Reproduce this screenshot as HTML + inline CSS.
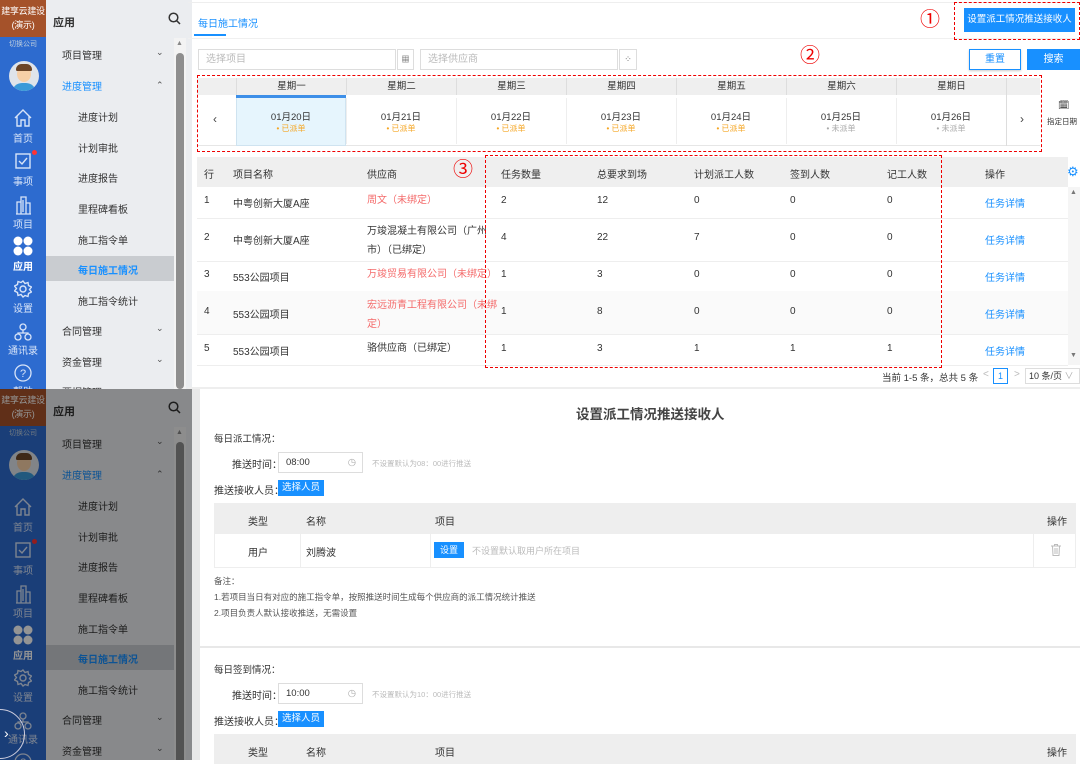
<!DOCTYPE html>
<html><head><meta charset="utf-8"><style>
*{margin:0;padding:0;box-sizing:border-box}
body{width:1080px;height:760px;overflow:hidden;position:relative;background:#fff;font-family:"Liberation Sans","Noto Sans CJK SC",sans-serif;font-size:10px;color:#333}
.a{position:absolute;white-space:nowrap}
.sb{position:absolute;left:0;width:192px;height:389px;overflow:hidden}
.rail{position:absolute;left:0;top:0;width:46px;height:389px;background:#2d6bcf}
.brand{position:absolute;left:0;top:0;width:46px;height:37px;background:#a5522a;color:#fff;font-size:9px;text-align:center;line-height:14px;padding-top:4px;white-space:nowrap;letter-spacing:-0.3px;overflow:hidden}
.menu{position:absolute;left:46px;top:0;width:146px;height:389px;background:#ebedf0}
.ri{position:absolute;left:0;width:46px;text-align:center;color:#d8e4f8;font-size:10px}
.mi{position:absolute;font-size:10px;color:#333}
.chev{position:absolute;left:110px;font-size:9px;color:#555}
.red{border:1.5px dashed #e00;position:absolute}
.circ{position:absolute;color:#e00;font-size:20px;line-height:20px}
.btn{position:absolute;background:#1890ff;color:#fff;text-align:center}
.inp{position:absolute;border:1px solid #ddd;background:#fff;color:#bbb;padding-left:7px}
.th{position:absolute;color:#333}
</style></head><body>

<!-- TOP SIDEBAR -->
<div class="sb" style="top:0">
 <div class="rail"></div>
 <div class="brand">建享云建设<br>(演示)</div>
 <div class="ri" style="top:39px;font-size:7px;color:#bcd">切换公司</div>
 <div class="a" style="left:9px;top:61px;width:30px;height:30px;border-radius:50%;background:#dfe4ea;overflow:hidden">
  <div class="a" style="left:8px;top:5px;width:14px;height:16px;border-radius:50%;background:#f6cfa6"></div>
  <div class="a" style="left:7px;top:3px;width:16px;height:7px;border-radius:8px 8px 2px 2px;background:#6b4527"></div>
  <div class="a" style="left:3px;top:22px;width:24px;height:12px;border-radius:10px 10px 0 0;background:#3a9ad9"></div>
 </div>
 <svg class="a" style="left:14px;top:109px" width="18" height="18" viewBox="0 0 18 18" fill="none" stroke="#d8e4f8" stroke-width="1.4"><path d="M1 9 9 1l8 8M3 7v10h4v-6h4v6h4V7"/></svg>
 <div class="ri" style="top:130px">首页</div>
 <svg class="a" style="left:15px;top:153px" width="16" height="16" viewBox="0 0 16 16" fill="none" stroke="#d8e4f8" stroke-width="1.4"><rect x="1" y="1" width="14" height="14"/><path d="M4 8l3 3 5-6"/></svg>
 <div class="a" style="left:32px;top:150px;width:5px;height:5px;border-radius:50%;background:#f33"></div>
 <div class="ri" style="top:173px">事项</div>
 <svg class="a" style="left:15px;top:195px" width="17" height="20" viewBox="0 0 17 20" fill="none" stroke="#d8e4f8" stroke-width="1.3"><path d="M1 19h15M2 19V7h4v12M6 19V2h5v17M11 19V8h4v11M8 5v12"/></svg>
 <div class="ri" style="top:216px">项目</div>
 <svg class="a" style="left:13px;top:236px" width="20" height="20" viewBox="0 0 20 20" fill="#fff"><circle cx="5" cy="5" r="4.5"/><circle cx="15" cy="5" r="4.5"/><circle cx="5" cy="15" r="4.5"/><circle cx="15" cy="15" r="4.5"/></svg>
 <div class="ri" style="top:258px;color:#fff;font-weight:bold">应用</div>
 <svg class="a" style="left:14px;top:280px" width="18" height="18" viewBox="0 0 18 18" fill="none" stroke="#d8e4f8" stroke-width="1.4"><circle cx="9" cy="9" r="3"/><path d="M9 1l2 2.5 3-1 .5 3 3 1.5-2 2.5 2 2.5-3 1.5-.5 3-3-1L9 17l-2-2.5-3 1-.5-3-3-1.5 2-2.5-2-2.5 3-1.5.5-3 3 1z"/></svg>
 <div class="ri" style="top:300px">设置</div>
 <svg class="a" style="left:14px;top:323px" width="18" height="18" viewBox="0 0 18 18" fill="none" stroke="#d8e4f8" stroke-width="1.3"><circle cx="9" cy="4" r="3"/><circle cx="4" cy="14" r="3"/><circle cx="14" cy="14" r="3"/><path d="M9 7v3M4 11v-1h10v1"/></svg>
 <div class="ri" style="top:342px">通讯录</div>
 <svg class="a" style="left:14px;top:364px" width="18" height="18" viewBox="0 0 18 18" fill="none" stroke="#d8e4f8" stroke-width="1.3"><circle cx="9" cy="9" r="8"/><text x="9" y="13" font-size="11" fill="#d8e4f8" stroke="none" text-anchor="middle" font-family="Liberation Sans">?</text></svg>
 <div class="ri" style="top:383px">帮助</div>
 <div class="menu">
  <div class="mi" style="left:7px;top:14px;font-size:11px;font-weight:bold">应用</div>
  <svg class="a" style="left:122px;top:12px" width="13" height="13" viewBox="0 0 13 13" fill="none" stroke="#333" stroke-width="1.5"><circle cx="5.5" cy="5.5" r="4.3"/><path d="M8.7 8.7 12 12"/></svg>
  <div class="a" style="left:128px;top:38px;width:12px;height:351px;background:#f3f3f3"></div>
  <div class="a" style="left:130px;top:53px;width:8px;height:336px;border-radius:4px;background:#8e8e8e"></div>
  <div class="a" style="left:130px;top:40px;font-size:7px;color:#888">▲</div>
  <div class="mi" style="left:16px;top:47px">项目管理</div><div class="chev" style="top:47px">⌄</div>
  <div class="mi" style="left:16px;top:78px;color:#1890ff">进度管理</div><div class="chev" style="top:80px">⌃</div>
  <div class="mi" style="left:32px;top:109px">进度计划</div>
  <div class="mi" style="left:32px;top:140px">计划审批</div>
  <div class="mi" style="left:32px;top:170px">进度报告</div>
  <div class="mi" style="left:32px;top:201px">里程碑看板</div>
  <div class="mi" style="left:32px;top:232px">施工指令单</div>
  <div class="a" style="left:0;top:256px;width:128px;height:25px;background:#c9ccd0"></div>
  <div class="mi" style="left:32px;top:262px;color:#1890ff;font-weight:bold">每日施工情况</div>
  <div class="mi" style="left:32px;top:293px">施工指令统计</div>
  <div class="mi" style="left:16px;top:323px">合同管理</div><div class="chev" style="top:323px">⌄</div>
  <div class="mi" style="left:16px;top:354px">资金管理</div><div class="chev" style="top:354px">⌄</div>
  <div class="mi" style="left:16px;top:384px">票据管理</div>
 </div>
</div>

<!-- TOP MAIN -->
<div class="a" style="left:192px;top:0;width:888px;height:389px;background:#fff"></div>
<div class="a" style="left:188px;top:2px;width:892px;height:1px;background:#eee"></div>
<div class="a" style="left:198px;top:15px;color:#1890ff">每日施工情况</div>
<div class="a" style="left:194px;top:34px;width:32px;height:2px;background:#1890ff"></div>
<div class="a" style="left:188px;top:38px;width:892px;height:1px;background:#f0f0f0"></div>
<div class="btn" style="left:964px;top:8px;width:111px;height:24px;line-height:24px;font-size:9.5px">设置派工情况推送接收人</div>
<div class="red" style="left:954px;top:2px;width:126px;height:38px"></div>
<div class="circ" style="left:920px;top:10px">①</div>

<div class="inp" style="left:198px;top:49px;width:198px;height:21px;line-height:19px">选择项目</div>
<div class="a" style="left:397px;top:49px;width:17px;height:21px;border:1px solid #ddd;font-size:8px;text-align:center;line-height:19px">▦</div>
<div class="inp" style="left:420px;top:49px;width:198px;height:21px;line-height:19px">选择供应商</div>
<div class="a" style="left:619px;top:49px;width:18px;height:21px;border:1px solid #ddd;font-size:9px;text-align:center;line-height:19px;color:#666">⁘</div>
<div class="circ" style="left:800px;top:46px">②</div>
<div class="a" style="left:969px;top:49px;width:52px;height:21px;border:1px solid #1890ff;color:#1890ff;text-align:center;line-height:19px;box-shadow:0 1px 2px #ccc">重置</div>
<div class="btn" style="left:1027px;top:49px;width:53px;height:21px;line-height:21px">搜索</div>

<!-- calendar -->
<div class="a" style="left:197px;top:78px;width:843px;height:17px;background:#efefef"></div>
<div class="a" style="left:197px;top:95px;width:843px;height:51px;background:#fff;border-bottom:1px solid #e6e6e6"></div>
<div class="a" style="left:236px;top:95px;width:110px;height:51px;background:#e6f5fd;border:1px solid #cfe3f0"></div>
<div class="a" style="left:236px;top:95px;width:110px;height:3px;background:#3d8fe8"></div>
<div class="a" style="left:213px;top:112px;font-size:12px;color:#444">‹</div>
<div class="a" style="left:1020px;top:112px;font-size:12px;color:#444">›</div>
<div id="cal"></div>
<div class="a" style="left:1058px;top:100px;font-size:9px">🗓</div>
<div class="a" style="left:1047px;top:116px;font-size:7.5px">指定日期</div>
<div class="red" style="left:197px;top:75px;width:845px;height:77px"></div>

<!-- table -->
<div class="a" style="left:197px;top:157px;width:871px;height:30px;background:#efefef"></div>
<div class="a" style="left:197px;top:218px;width:871px;height:1px;background:#eee"></div>
<div class="a" style="left:197px;top:261px;width:871px;height:1px;background:#eee"></div>
<div class="a" style="left:197px;top:291px;width:871px;height:1px;background:#eee"></div>
<div class="a" style="left:197px;top:291px;width:871px;height:43px;background:#fafafa"></div>
<div class="a" style="left:197px;top:334px;width:871px;height:1px;background:#eee"></div>
<div class="a" style="left:197px;top:365px;width:871px;height:1px;background:#eee"></div>
<div class="th" style="left:204px;top:166px">行</div>
<div class="th" style="left:233px;top:166px">项目名称</div>
<div class="th" style="left:367px;top:166px">供应商</div>
<div class="th" style="left:501px;top:166px">任务数量</div>
<div class="th" style="left:597px;top:166px">总要求到场</div>
<div class="th" style="left:694px;top:166px">计划派工人数</div>
<div class="th" style="left:790px;top:166px">签到人数</div>
<div class="th" style="left:887px;top:166px">记工人数</div>
<div class="th" style="left:985px;top:166px">操作</div>
<div class="circ" style="left:453px;top:160px">③</div>
<div class="a" style="left:1067px;top:164px;color:#1890ff;font-size:13px">⚙</div>
<div class="a" style="left:1068px;top:187px;width:12px;height:178px;background:#f5f5f5"></div>
<div class="a" style="left:1070px;top:189px;font-size:7px;color:#777">▲</div>
<div class="a" style="left:1070px;top:352px;font-size:7px;color:#777">▼</div>
<div id="rows"></div>
<div class="red" style="left:485px;top:155px;width:457px;height:213px"></div>
<div class="a" style="left:882px;top:370px;font-size:9.5px">当前 1-5 条，总共 5 条</div>
<div class="a" style="left:983px;top:369px;color:#bbb">&lt;</div>
<div class="a" style="left:993px;top:368px;width:15px;height:16px;border:1px solid #1890ff;color:#1890ff;text-align:center;line-height:14px;font-size:9px">1</div>
<div class="a" style="left:1014px;top:369px;color:#bbb">&gt;</div>
<div class="a" style="left:1025px;top:368px;width:55px;height:16px;border:1px solid #ddd;line-height:14px;padding-left:3px;font-size:9px">10 条/页 <span style="color:#aaa">∨</span></div>
<div class="a" style="left:188px;top:387px;width:892px;height:2px;background:#eee"></div>

<!-- BOTTOM -->
<div class="sb" style="top:389px;height:371px">
 <div style="position:absolute;left:0;top:0;width:192px;height:389px" id="sb2"></div>
</div>

<div class="a" style="left:192px;top:389px;width:8px;height:371px;background:#e8e8e8"></div>
<div class="a" style="left:200px;top:389px;width:880px;height:371px;background:#fff"></div>
<div class="a" style="left:576px;top:403px;font-size:13.5px;font-weight:bold;color:#444">设置派工情况推送接收人</div>
<div id="sec"></div>
<div class="a" style="left:200px;top:646px;width:880px;height:2px;background:#e8e8e8"></div>

<script>
var days=['星期一','星期二','星期三','星期四','星期五','星期六','星期日'],h='';
for(var i=0;i<7;i++){var x=236+i*110;
h+='<div class="a" style="left:'+x+'px;top:78px;width:110px;height:17px;border-left:1px solid #ddd;text-align:center;line-height:17px;font-size:9.5px">'+days[i]+'</div>';
if(i>0)h+='<div class="a" style="left:'+x+'px;top:98px;width:1px;height:46px;background:#eee"></div>';
h+='<div class="a" style="left:'+x+'px;top:109px;width:110px;text-align:center;font-size:9.5px">01月'+(20+i)+'日</div>';
h+='<div class="a" style="left:'+x+'px;top:123px;width:110px;text-align:center;font-size:8px;color:'+(i<5?'#f5a623':'#aaa')+'">• '+(i<5?'已派单':'未派单')+'</div>';}
h+='<div class="a" style="left:1006px;top:78px;width:1px;height:68px;background:#ddd"></div>';
document.getElementById('cal').innerHTML=h;
var R=[[202,'1','中粤创新大厦A座','周文（未绑定）',1,'2','12','0','0','0'],[239,'2','中粤创新大厦A座','万竣混凝土有限公司（广州<br>市）（已绑定）',0,'4','22','7','0','0'],[276,'3','553公园项目','万竣贸易有限公司（未绑定）',1,'1','3','0','0','0'],[313,'4','553公园项目','宏远沥青工程有限公司（未绑<br>定）',1,'1','8','0','0','0'],[350,'5','553公园项目','骆供应商（已绑定）',0,'1','3','1','1','1']];
h='';R.forEach(function(r){var y=r[0];var two=r[3].indexOf('<br>')>0;
h+='<div class="a" style="left:204px;top:'+(y-7)+'px">'+r[1]+'</div>';
h+='<div class="a" style="left:233px;top:'+(y-7)+'px">'+r[2]+'</div>';
h+='<div class="a" style="left:367px;top:'+(y-(two?17:7))+'px;line-height:'+(two?'19px':'12px')+';color:'+(r[4]?'#f46a6a':'#333')+'">'+r[3]+'</div>';
[501,597,694,790,887].forEach(function(x,k){h+='<div class="a" style="left:'+x+'px;top:'+(y-7)+'px">'+r[5+k]+'</div>';});
h+='<div class="a" style="left:985px;top:'+(y-7)+'px;color:#1890ff">任务详情</div>';});
document.getElementById('rows').innerHTML=h;
var s=document.querySelector('.sb').innerHTML;
document.getElementById('sb2').innerHTML=s+'<div class="a" style="left:0;top:0;width:192px;height:389px;background:rgba(0,0,0,.42)"></div><div class="a" style="left:-25px;top:320px;width:50px;height:50px;border-radius:50%;border:1.5px solid #ccd"></div><div class="a" style="left:4px;top:336px;color:#fff;font-size:14px">›</div>';
function sec(y,t1,tm,ht,full){var q='';
q+='<div class="a" style="left:214px;top:'+y+'px;font-size:9.5px">'+t1+'</div>';
q+='<div class="a" style="left:232px;top:'+(y+25)+'px;font-size:10px">推送时间：</div>';
q+='<div class="a" style="left:278px;top:'+(y+21)+'px;width:85px;height:21px;border:1px solid #ddd;padding-left:7px;line-height:19px;font-size:9.5px">'+tm+'<span style="position:absolute;right:6px;color:#aaa">◷</span></div>';
q+='<div class="a" style="left:372px;top:'+(y+27)+'px;font-size:7.5px;color:#bbb">'+ht+'</div>';
q+='<div class="a" style="left:214px;top:'+(y+51)+'px;font-size:10px">推送接收人员：</div>';
q+='<div class="btn" style="left:278px;top:'+(y+49)+'px;width:46px;height:16px;line-height:16px;font-size:9.5px">选择人员</div>';
var ty=y+72;
q+='<div class="a" style="left:214px;top:'+ty+'px;width:862px;height:30px;background:#eee"></div>';
q+='<div class="a" style="left:248px;top:'+(ty+10)+'px">类型</div><div class="a" style="left:306px;top:'+(ty+10)+'px">名称</div><div class="a" style="left:435px;top:'+(ty+10)+'px">项目</div><div class="a" style="left:1047px;top:'+(ty+10)+'px">操作</div>';
if(full){var ry=ty+30;
q+='<div class="a" style="left:214px;top:'+ry+'px;width:862px;height:35px;border:1px solid #eee"></div>';
q+='<div class="a" style="left:300px;top:'+ry+'px;width:1px;height:35px;background:#eee"></div><div class="a" style="left:430px;top:'+ry+'px;width:1px;height:35px;background:#eee"></div><div class="a" style="left:1033px;top:'+ry+'px;width:1px;height:35px;background:#eee"></div>';
q+='<div class="a" style="left:248px;top:'+(ry+11)+'px">用户</div><div class="a" style="left:306px;top:'+(ry+11)+'px">刘腾波</div>';
q+='<div class="btn" style="left:434px;top:'+(ry+9)+'px;width:30px;height:16px;line-height:16px;font-size:9px">设置</div>';
q+='<div class="a" style="left:472px;top:'+(ry+11)+'px;font-size:9px;color:#bbb">不设置默认取用户所在项目</div>';
q+='<svg class="a" style="left:1051px;top:'+(ry+11)+'px" width="10" height="12" viewBox="0 0 10 12" fill="none" stroke="#bbb" stroke-width="1"><path d="M0 2h10M3.5 2V.5h3V2M1.5 2l.5 9.5h6l.5-9.5M4 4v6M6 4v6"/></svg>';
q+='<div class="a" style="left:214px;top:575px;font-size:8.5px;color:#555">备注：</div>';
q+='<div class="a" style="left:214px;top:591px;font-size:8.5px;color:#555">1.若项目当日有对应的施工指令单，按照推送时间生成每个供应商的派工情况统计推送</div>';
q+='<div class="a" style="left:214px;top:607px;font-size:8.5px;color:#555">2.项目负责人默认接收推送，无需设置</div>';}
return q;}
document.getElementById('sec').innerHTML=sec(431,'每日派工情况：','08:00','不设置默认为08：00进行推送',1)+sec(662,'每日签到情况：','10:00','不设置默认为10：00进行推送',0);
</script>
</body></html>
